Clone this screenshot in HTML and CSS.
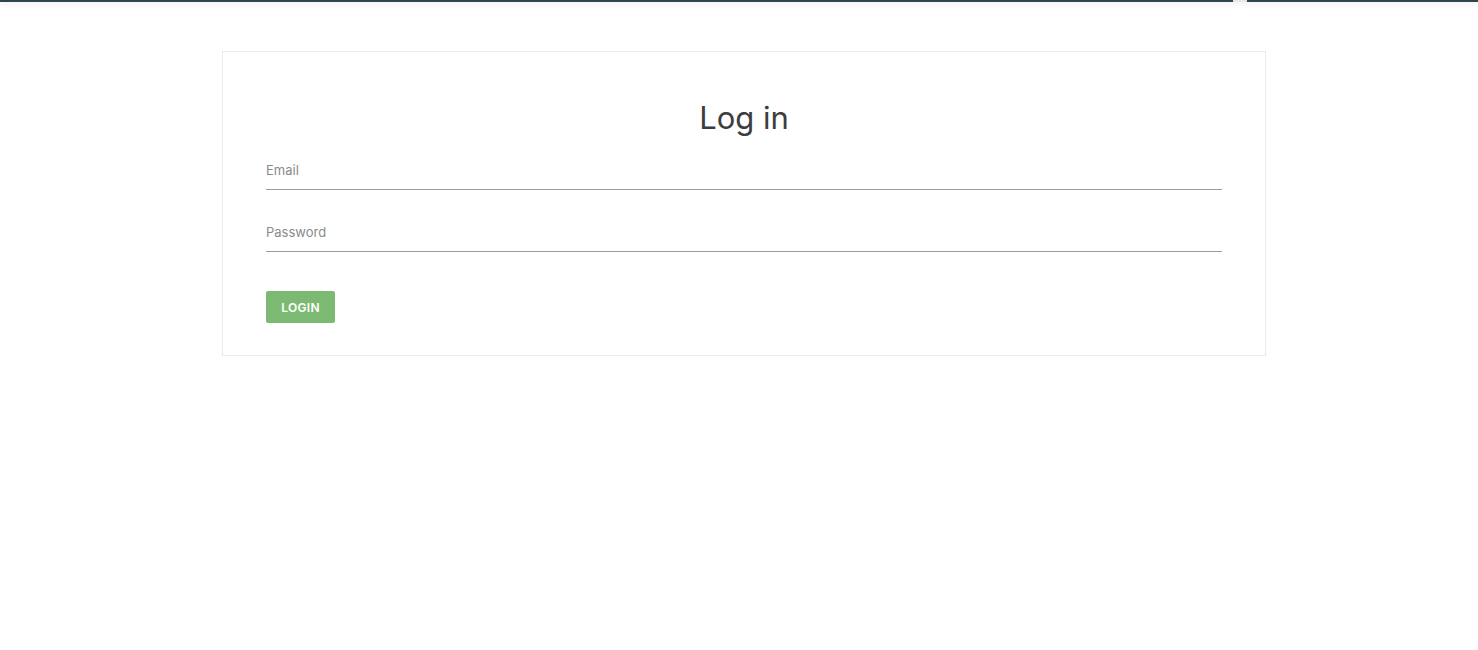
FILE: index.html
```html
<!DOCTYPE html>
<html lang="en">
<head>
<meta charset="utf-8">
<title>Log in</title>
<link rel="stylesheet" href="styles.css">
</head>
<body>
<div class="topbar">
  <div class="topbar-seg topbar-main"></div>
  <div class="topbar-gap"></div>
  <div class="topbar-seg topbar-end"></div>
</div>
<main class="page">
  <form class="card">
    <h1 class="title">Log in</h1>
    <div class="field">
      <span class="field-label">Email</span>
    </div>
    <div class="field field-second">
      <span class="field-label">Password</span>
    </div>
    <button type="button" class="btn-login">LOGIN</button>
  </form>
</main>
</body>
</html>
```

FILE: styles.css
```css
html, body {
  margin: 0;
  padding: 0;
  background: #ffffff;
}

body {
  font-family: Inter, "Noto Sans", "Liberation Sans", sans-serif;
  color: #3a3a3a;
}

.topbar {
  display: flex;
  height: 2px;
  box-shadow: 0 2px 6px rgba(0, 0, 0, 0.12);
}

.topbar-seg {
  background: #2f4748;
}

.topbar-main {
  width: 1233px;
}

.topbar-gap {
  width: 14px;
  background: #e6e8e8;
}

.topbar-end {
  flex: 1;
}

.page {
  padding: 49px 0 0 222px;
}

.card {
  box-sizing: border-box;
  width: 1044px;
  border: 1px solid #ebebeb;
  padding: 46px 43px 32px 43px;
  display: flex;
  flex-direction: column;
}

.title {
  margin: 0 0 16px;
  font-size: 31px;
  font-weight: 400;
  line-height: 39px;
  text-align: center;
  color: #3d3d3d;
}

.field {
  padding: 8px 0 11px;
  border-bottom: 1px solid #9d9d9d;
  line-height: 16px;
}

.field-second {
  margin-top: 25px;
}

.field-label {
  font-size: 13px;
  color: #8a8a8a;
}

.btn-login {
  align-self: flex-start;
  margin-top: 39px;
  height: 32px;
  width: 69px;
  padding: 0;
  border: none;
  border-radius: 2px;
  background: #7cba73;
  color: #ffffff;
  font-family: Inter, "Noto Sans", "Liberation Sans", sans-serif;
  font-size: 12px;
  font-weight: 600;
  letter-spacing: 0.3px;
}
```
